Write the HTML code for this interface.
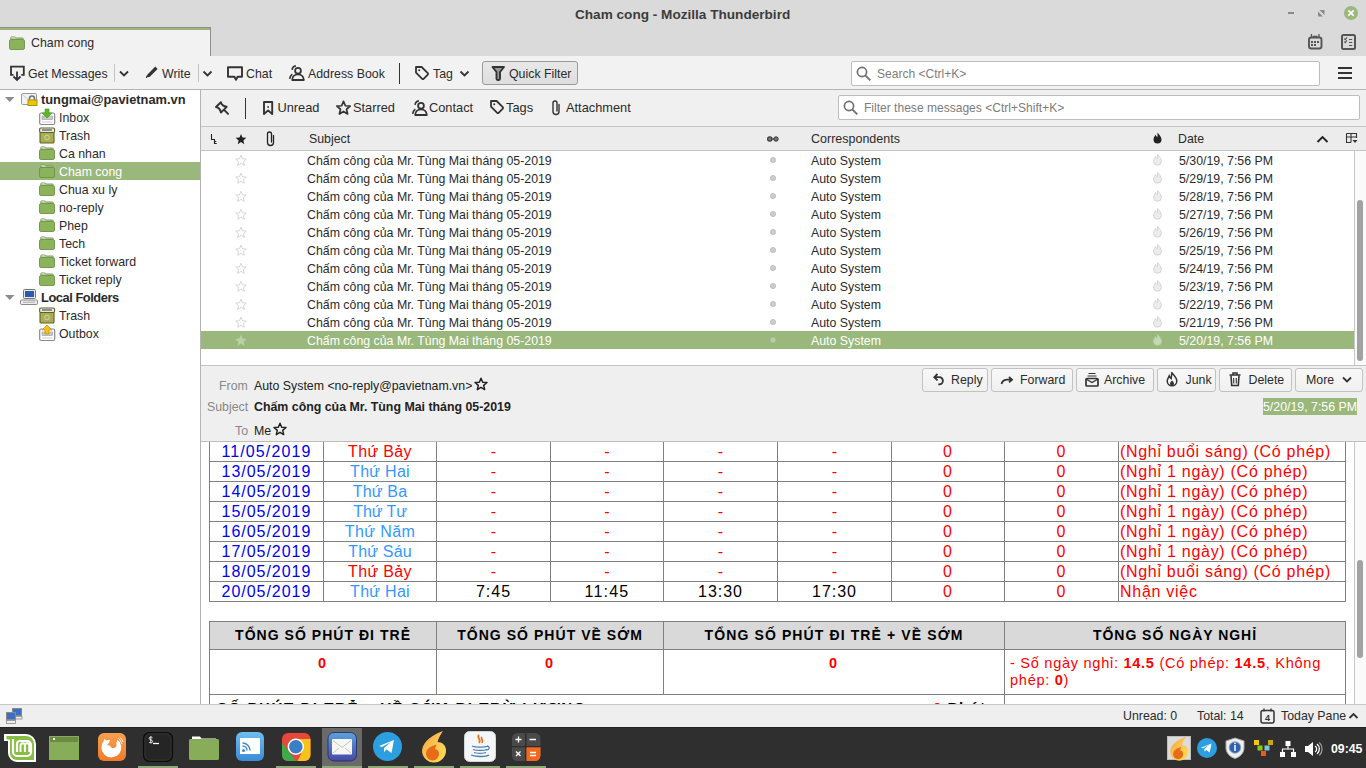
<!DOCTYPE html><html><head><meta charset="utf-8"><style>
*{box-sizing:border-box;margin:0;padding:0}
html,body{width:1366px;height:768px;overflow:hidden;background:#f2f2f2;font-family:"Liberation Sans",sans-serif;font-size:12.35px;color:#2b2b2b}
.a{position:absolute}
.t{position:absolute;white-space:nowrap;line-height:1}
#ov{position:absolute;left:0;top:0;width:1366px;height:768px;overflow:visible}
</style></head><body>
<div class="a" style="left:0px;top:0px;width:1366px;height:56px;background:#dadada"></div>
<div class="a" style="left:0px;top:27px;width:211px;height:29px;background:#f2f2f2;border-top:1px solid #8e8e8e;border-right:1px solid #8e8e8e"></div>
<div class="a" style="left:0px;top:28px;width:210px;height:2px;background:#9ab87c"></div>
<div class="a" style="left:0px;top:56px;width:1366px;height:34px;background:#f2f2f2;border-bottom:1px solid #b4b4b4"></div>
<div class="a" style="left:0px;top:90px;width:200px;height:614px;background:#fff"></div>
<div class="a" style="left:200px;top:90px;width:1px;height:614px;background:#b4b4b4"></div>
<div class="a" style="left:201px;top:90px;width:1165px;height:37px;background:#f0f0f0;border-bottom:1px solid #c4c4c4"></div>
<div class="a" style="left:201px;top:127px;width:1165px;height:24px;background:#ececec;border-bottom:1px solid #c4c4c4"></div>
<div class="a" style="left:201px;top:151px;width:1165px;height:214px;background:#fff"></div>
<div class="a" style="left:201px;top:365px;width:1165px;height:77px;background:#efefef;border-top:1px solid #c4c4c4;border-bottom:1px solid #bebebe"></div>
<div class="a" style="left:201px;top:442px;width:1165px;height:262px;background:#fff"></div>
<div class="a" style="left:0px;top:704px;width:1366px;height:23px;background:#efefef;border-top:1px solid #c8c8c8"></div>
<div class="a" style="left:0px;top:727px;width:1366px;height:41px;background:#2f2f2f;border-top:1px solid #222"></div>
<div class="t" style="left:575px;top:8px;font-weight:bold;font-size:13.6px;color:#3c3c3c">Cham cong - Mozilla Thunderbird</div>
<div class="a" style="left:1288px;top:12px;width:6px;height:2px;background:#8a8a8a"></div>
<div class="t" style="left:31px;top:37px;">Cham cong</div>
<div class="t" style="left:28px;top:68px;">Get Messages</div>
<div class="a" style="left:114px;top:64px;width:1px;height:18px;background:#c4c4c4"></div>
<div class="t" style="left:162px;top:68px;">Write</div>
<div class="a" style="left:198px;top:64px;width:1px;height:18px;background:#c4c4c4"></div>
<div class="t" style="left:246px;top:68px;">Chat</div>
<div class="t" style="left:308px;top:68px;">Address Book</div>
<div class="a" style="left:399px;top:63px;width:1.3px;height:21px;background:#333"></div>
<div class="t" style="left:433px;top:68px;">Tag</div>
<div class="a" style="left:482px;top:61px;width:96px;height:24px;background:linear-gradient(#e8e8e8,#dedede);border:1px solid #9a9a9a;border-radius:3px"></div>
<div class="t" style="left:509px;top:68px;">Quick Filter</div>
<div class="a" style="left:851px;top:61px;width:469px;height:25px;background:#fff;border:1px solid #bdbdbd;border-radius:2px"></div>
<div class="t" style="left:877px;top:68px;color:#7d7d7d;font-size:12.05px">Search &lt;Ctrl+K&gt;</div>
<div class="t" style="left:41px;top:94px;font-weight:bold;font-size:12.85px;color:#2a2a2a">tungmai@pavietnam.vn</div>
<div class="t" style="left:59px;top:112px;">Inbox</div>
<div class="t" style="left:59px;top:130px;">Trash</div>
<div class="t" style="left:59px;top:148px;">Ca nhan</div>
<div class="a" style="left:0px;top:162px;width:200px;height:18px;background:#9ab87c"></div>
<div class="t" style="left:59px;top:166px;color:#fff">Cham cong</div>
<div class="t" style="left:59px;top:184px;">Chua xu ly</div>
<div class="t" style="left:59px;top:202px;">no-reply</div>
<div class="t" style="left:59px;top:220px;">Phep</div>
<div class="t" style="left:59px;top:238px;">Tech</div>
<div class="t" style="left:59px;top:256px;">Ticket forward</div>
<div class="t" style="left:59px;top:274px;">Ticket reply</div>
<div class="t" style="left:41px;top:292px;font-weight:bold;font-size:12.85px;letter-spacing:-.45px;color:#2a2a2a">Local Folders</div>
<div class="t" style="left:59px;top:310px;">Trash</div>
<div class="t" style="left:59px;top:328px;">Outbox</div>
<div class="a" style="left:245px;top:98px;width:1.4px;height:21px;background:#333"></div>
<div class="t" style="left:277.5px;top:102px;font-size:12.8px">Unread</div>
<div class="t" style="left:353px;top:102px;font-size:12.8px">Starred</div>
<div class="t" style="left:429px;top:102px;font-size:12.8px">Contact</div>
<div class="t" style="left:506px;top:102px;font-size:12.8px">Tags</div>
<div class="t" style="left:566px;top:102px;font-size:12.8px">Attachment</div>
<div class="a" style="left:838px;top:95px;width:522px;height:25px;background:#fff;border:1px solid #bdbdbd;border-radius:2px"></div>
<div class="t" style="left:864px;top:102px;color:#7d7d7d;font-size:12.05px">Filter these messages &lt;Ctrl+Shift+K&gt;</div>
<div class="t" style="left:309px;top:133px;">Subject</div>
<div class="t" style="left:811px;top:133px;font-size:12.5px">Correspondents</div>
<div class="t" style="left:1178px;top:133px;">Date</div>
<div class="t" style="left:307px;top:155px;">Chấm công của Mr. Tùng Mai tháng 05-2019</div>
<div class="t" style="left:811px;top:155px;">Auto System</div>
<div class="t" style="left:1179px;top:155px;">5/30/19, 7:56 PM</div>
<div class="t" style="left:307px;top:173px;">Chấm công của Mr. Tùng Mai tháng 05-2019</div>
<div class="t" style="left:811px;top:173px;">Auto System</div>
<div class="t" style="left:1179px;top:173px;">5/29/19, 7:56 PM</div>
<div class="t" style="left:307px;top:191px;">Chấm công của Mr. Tùng Mai tháng 05-2019</div>
<div class="t" style="left:811px;top:191px;">Auto System</div>
<div class="t" style="left:1179px;top:191px;">5/28/19, 7:56 PM</div>
<div class="t" style="left:307px;top:209px;">Chấm công của Mr. Tùng Mai tháng 05-2019</div>
<div class="t" style="left:811px;top:209px;">Auto System</div>
<div class="t" style="left:1179px;top:209px;">5/27/19, 7:56 PM</div>
<div class="t" style="left:307px;top:227px;">Chấm công của Mr. Tùng Mai tháng 05-2019</div>
<div class="t" style="left:811px;top:227px;">Auto System</div>
<div class="t" style="left:1179px;top:227px;">5/26/19, 7:56 PM</div>
<div class="t" style="left:307px;top:245px;">Chấm công của Mr. Tùng Mai tháng 05-2019</div>
<div class="t" style="left:811px;top:245px;">Auto System</div>
<div class="t" style="left:1179px;top:245px;">5/25/19, 7:56 PM</div>
<div class="t" style="left:307px;top:263px;">Chấm công của Mr. Tùng Mai tháng 05-2019</div>
<div class="t" style="left:811px;top:263px;">Auto System</div>
<div class="t" style="left:1179px;top:263px;">5/24/19, 7:56 PM</div>
<div class="t" style="left:307px;top:281px;">Chấm công của Mr. Tùng Mai tháng 05-2019</div>
<div class="t" style="left:811px;top:281px;">Auto System</div>
<div class="t" style="left:1179px;top:281px;">5/23/19, 7:56 PM</div>
<div class="t" style="left:307px;top:299px;">Chấm công của Mr. Tùng Mai tháng 05-2019</div>
<div class="t" style="left:811px;top:299px;">Auto System</div>
<div class="t" style="left:1179px;top:299px;">5/22/19, 7:56 PM</div>
<div class="t" style="left:307px;top:317px;">Chấm công của Mr. Tùng Mai tháng 05-2019</div>
<div class="t" style="left:811px;top:317px;">Auto System</div>
<div class="t" style="left:1179px;top:317px;">5/21/19, 7:56 PM</div>
<div class="a" style="left:201px;top:331px;width:1153px;height:18px;background:#9ab87c"></div>
<div class="t" style="left:307px;top:335px;color:#fff">Chấm công của Mr. Tùng Mai tháng 05-2019</div>
<div class="t" style="left:811px;top:335px;color:#fff">Auto System</div>
<div class="t" style="left:1179px;top:335px;color:#fff">5/20/19, 7:56 PM</div>
<div class="a" style="left:1354px;top:151px;width:12px;height:214px;background:#fafafa;border-left:1px solid #c8c8c8"></div>
<div class="a" style="left:1357px;top:200px;width:6px;height:161px;background:#a2a2a2;border-radius:3px"></div>
<div class="t" style="left:219px;top:380px;color:#888">From</div>
<div class="t" style="left:254px;top:380px;color:#222">Auto System &lt;no-reply@pavietnam.vn&gt;</div>
<div class="t" style="left:207px;top:401px;color:#888">Subject</div>
<div class="t" style="left:254px;top:401px;color:#222;font-weight:bold;font-size:12.37px">Chấm công của Mr. Tùng Mai tháng 05-2019</div>
<div class="t" style="left:235px;top:425px;color:#888">To</div>
<div class="t" style="left:254px;top:425px;color:#222">Me</div>
<div class="a" style="left:922px;top:368px;width:66px;height:24px;background:linear-gradient(#f8f8f8,#f0f0f0);border:1px solid #c2c2c2;border-radius:3px"></div>
<div class="t" style="left:951px;top:374px;">Reply</div>
<div class="a" style="left:991px;top:368px;width:82px;height:24px;background:linear-gradient(#f8f8f8,#f0f0f0);border:1px solid #c2c2c2;border-radius:3px"></div>
<div class="t" style="left:1020px;top:374px;">Forward</div>
<div class="a" style="left:1076px;top:368px;width:78px;height:24px;background:linear-gradient(#f8f8f8,#f0f0f0);border:1px solid #c2c2c2;border-radius:3px"></div>
<div class="t" style="left:1104px;top:374px;">Archive</div>
<div class="a" style="left:1157px;top:368px;width:59px;height:24px;background:linear-gradient(#f8f8f8,#f0f0f0);border:1px solid #c2c2c2;border-radius:3px"></div>
<div class="t" style="left:1185.5px;top:374px;">Junk</div>
<div class="a" style="left:1219px;top:368px;width:73px;height:24px;background:linear-gradient(#f8f8f8,#f0f0f0);border:1px solid #c2c2c2;border-radius:3px"></div>
<div class="t" style="left:1248.5px;top:374px;">Delete</div>
<div class="a" style="left:1295px;top:368px;width:68px;height:24px;background:linear-gradient(#f8f8f8,#f0f0f0);border:1px solid #c2c2c2;border-radius:3px"></div>
<div class="t" style="left:1306px;top:374px;">More</div>
<div class="a" style="left:1263px;top:398px;width:94px;height:17px;background:#9ab87c"></div>
<div class="t" style="left:1263px;top:401px;color:#fff">5/20/19, 7:56 PM</div>
<div class="a" style="left:209px;top:442px;width:1px;height:160px;background:#808080"></div>
<div class="a" style="left:323px;top:442px;width:1px;height:160px;background:#808080"></div>
<div class="a" style="left:436px;top:442px;width:1px;height:160px;background:#808080"></div>
<div class="a" style="left:550px;top:442px;width:1px;height:160px;background:#808080"></div>
<div class="a" style="left:663px;top:442px;width:1px;height:160px;background:#808080"></div>
<div class="a" style="left:777px;top:442px;width:1px;height:160px;background:#808080"></div>
<div class="a" style="left:891px;top:442px;width:1px;height:160px;background:#808080"></div>
<div class="a" style="left:1004px;top:442px;width:1px;height:160px;background:#808080"></div>
<div class="a" style="left:1118px;top:442px;width:1px;height:160px;background:#808080"></div>
<div class="a" style="left:1345px;top:442px;width:1px;height:160px;background:#808080"></div>
<div class="a" style="left:209px;top:461px;width:1137px;height:1px;background:#808080"></div>
<div class="a" style="left:209px;top:481px;width:1137px;height:1px;background:#808080"></div>
<div class="a" style="left:209px;top:501px;width:1137px;height:1px;background:#808080"></div>
<div class="a" style="left:209px;top:521px;width:1137px;height:1px;background:#808080"></div>
<div class="a" style="left:209px;top:541px;width:1137px;height:1px;background:#808080"></div>
<div class="a" style="left:209px;top:561px;width:1137px;height:1px;background:#808080"></div>
<div class="a" style="left:209px;top:581px;width:1137px;height:1px;background:#808080"></div>
<div class="a" style="left:209px;top:601px;width:1137px;height:1px;background:#808080"></div>
<div class="t" style="left:221.5px;top:444px;color:#0000ee;font-size:16.0px;letter-spacing:1.10px;">11/05/2019</div>
<div class="t" style="left:348.1px;top:444px;color:#ff0000;font-size:16.0px;letter-spacing:0.34px;">Thứ Bảy</div>
<div class="t" style="left:490.7px;top:444px;color:#ff0000;font-size:16.0px;letter-spacing:0.30px;">-</div>
<div class="t" style="left:604.2px;top:444px;color:#ff0000;font-size:16.0px;letter-spacing:0.30px;">-</div>
<div class="t" style="left:717.7px;top:444px;color:#ff0000;font-size:16.0px;letter-spacing:0.30px;">-</div>
<div class="t" style="left:831.7px;top:444px;color:#ff0000;font-size:16.0px;letter-spacing:0.30px;">-</div>
<div class="t" style="left:943.0px;top:444px;color:#ff0000;font-size:16.0px;letter-spacing:1.03px;">0</div>
<div class="t" style="left:1056.5px;top:444px;color:#ff0000;font-size:16.0px;letter-spacing:1.03px;">0</div>
<div class="t" style="left:1120px;top:444px;color:#ff0000;font-size:16.0px;letter-spacing:0.69px;">(Nghỉ buổi sáng) (Có phép)</div>
<div class="t" style="left:221.5px;top:464px;color:#0000ee;font-size:16.0px;letter-spacing:0.98px;">13/05/2019</div>
<div class="t" style="left:350.1px;top:464px;color:#3399ff;font-size:16.0px;letter-spacing:0.29px;">Thứ Hai</div>
<div class="t" style="left:490.7px;top:464px;color:#ff0000;font-size:16.0px;letter-spacing:0.30px;">-</div>
<div class="t" style="left:604.2px;top:464px;color:#ff0000;font-size:16.0px;letter-spacing:0.30px;">-</div>
<div class="t" style="left:717.7px;top:464px;color:#ff0000;font-size:16.0px;letter-spacing:0.30px;">-</div>
<div class="t" style="left:831.7px;top:464px;color:#ff0000;font-size:16.0px;letter-spacing:0.30px;">-</div>
<div class="t" style="left:943.0px;top:464px;color:#ff0000;font-size:16.0px;letter-spacing:1.03px;">0</div>
<div class="t" style="left:1056.5px;top:464px;color:#ff0000;font-size:16.0px;letter-spacing:1.03px;">0</div>
<div class="t" style="left:1120px;top:464px;color:#ff0000;font-size:16.0px;letter-spacing:0.72px;">(Nghỉ 1 ngày) (Có phép)</div>
<div class="t" style="left:221.5px;top:484px;color:#0000ee;font-size:16.0px;letter-spacing:0.98px;">14/05/2019</div>
<div class="t" style="left:352.7px;top:484px;color:#3399ff;font-size:16.0px;letter-spacing:0.19px;">Thứ Ba</div>
<div class="t" style="left:490.7px;top:484px;color:#ff0000;font-size:16.0px;letter-spacing:0.30px;">-</div>
<div class="t" style="left:604.2px;top:484px;color:#ff0000;font-size:16.0px;letter-spacing:0.30px;">-</div>
<div class="t" style="left:717.7px;top:484px;color:#ff0000;font-size:16.0px;letter-spacing:0.30px;">-</div>
<div class="t" style="left:831.7px;top:484px;color:#ff0000;font-size:16.0px;letter-spacing:0.30px;">-</div>
<div class="t" style="left:943.0px;top:484px;color:#ff0000;font-size:16.0px;letter-spacing:1.03px;">0</div>
<div class="t" style="left:1056.5px;top:484px;color:#ff0000;font-size:16.0px;letter-spacing:1.03px;">0</div>
<div class="t" style="left:1120px;top:484px;color:#ff0000;font-size:16.0px;letter-spacing:0.72px;">(Nghỉ 1 ngày) (Có phép)</div>
<div class="t" style="left:221.5px;top:504px;color:#0000ee;font-size:16.0px;letter-spacing:0.98px;">15/05/2019</div>
<div class="t" style="left:353.2px;top:504px;color:#3399ff;font-size:16.0px;letter-spacing:-0.06px;">Thứ Tư</div>
<div class="t" style="left:490.7px;top:504px;color:#ff0000;font-size:16.0px;letter-spacing:0.30px;">-</div>
<div class="t" style="left:604.2px;top:504px;color:#ff0000;font-size:16.0px;letter-spacing:0.30px;">-</div>
<div class="t" style="left:717.7px;top:504px;color:#ff0000;font-size:16.0px;letter-spacing:0.30px;">-</div>
<div class="t" style="left:831.7px;top:504px;color:#ff0000;font-size:16.0px;letter-spacing:0.30px;">-</div>
<div class="t" style="left:943.0px;top:504px;color:#ff0000;font-size:16.0px;letter-spacing:1.03px;">0</div>
<div class="t" style="left:1056.5px;top:504px;color:#ff0000;font-size:16.0px;letter-spacing:1.03px;">0</div>
<div class="t" style="left:1120px;top:504px;color:#ff0000;font-size:16.0px;letter-spacing:0.72px;">(Nghỉ 1 ngày) (Có phép)</div>
<div class="t" style="left:221.5px;top:524px;color:#0000ee;font-size:16.0px;letter-spacing:0.98px;">16/05/2019</div>
<div class="t" style="left:344.7px;top:524px;color:#3399ff;font-size:16.0px;letter-spacing:0.44px;">Thứ Năm</div>
<div class="t" style="left:490.7px;top:524px;color:#ff0000;font-size:16.0px;letter-spacing:0.30px;">-</div>
<div class="t" style="left:604.2px;top:524px;color:#ff0000;font-size:16.0px;letter-spacing:0.30px;">-</div>
<div class="t" style="left:717.7px;top:524px;color:#ff0000;font-size:16.0px;letter-spacing:0.30px;">-</div>
<div class="t" style="left:831.7px;top:524px;color:#ff0000;font-size:16.0px;letter-spacing:0.30px;">-</div>
<div class="t" style="left:943.0px;top:524px;color:#ff0000;font-size:16.0px;letter-spacing:1.03px;">0</div>
<div class="t" style="left:1056.5px;top:524px;color:#ff0000;font-size:16.0px;letter-spacing:1.03px;">0</div>
<div class="t" style="left:1120px;top:524px;color:#ff0000;font-size:16.0px;letter-spacing:0.72px;">(Nghỉ 1 ngày) (Có phép)</div>
<div class="t" style="left:221.5px;top:544px;color:#0000ee;font-size:16.0px;letter-spacing:0.98px;">17/05/2019</div>
<div class="t" style="left:348.2px;top:544px;color:#3399ff;font-size:16.0px;letter-spacing:0.19px;">Thứ Sáu</div>
<div class="t" style="left:490.7px;top:544px;color:#ff0000;font-size:16.0px;letter-spacing:0.30px;">-</div>
<div class="t" style="left:604.2px;top:544px;color:#ff0000;font-size:16.0px;letter-spacing:0.30px;">-</div>
<div class="t" style="left:717.7px;top:544px;color:#ff0000;font-size:16.0px;letter-spacing:0.30px;">-</div>
<div class="t" style="left:831.7px;top:544px;color:#ff0000;font-size:16.0px;letter-spacing:0.30px;">-</div>
<div class="t" style="left:943.0px;top:544px;color:#ff0000;font-size:16.0px;letter-spacing:1.03px;">0</div>
<div class="t" style="left:1056.5px;top:544px;color:#ff0000;font-size:16.0px;letter-spacing:1.03px;">0</div>
<div class="t" style="left:1120px;top:544px;color:#ff0000;font-size:16.0px;letter-spacing:0.72px;">(Nghỉ 1 ngày) (Có phép)</div>
<div class="t" style="left:221.5px;top:564px;color:#0000ee;font-size:16.0px;letter-spacing:0.98px;">18/05/2019</div>
<div class="t" style="left:348.1px;top:564px;color:#ff0000;font-size:16.0px;letter-spacing:0.34px;">Thứ Bảy</div>
<div class="t" style="left:490.7px;top:564px;color:#ff0000;font-size:16.0px;letter-spacing:0.30px;">-</div>
<div class="t" style="left:604.2px;top:564px;color:#ff0000;font-size:16.0px;letter-spacing:0.30px;">-</div>
<div class="t" style="left:717.7px;top:564px;color:#ff0000;font-size:16.0px;letter-spacing:0.30px;">-</div>
<div class="t" style="left:831.7px;top:564px;color:#ff0000;font-size:16.0px;letter-spacing:0.30px;">-</div>
<div class="t" style="left:943.0px;top:564px;color:#ff0000;font-size:16.0px;letter-spacing:1.03px;">0</div>
<div class="t" style="left:1056.5px;top:564px;color:#ff0000;font-size:16.0px;letter-spacing:1.03px;">0</div>
<div class="t" style="left:1120px;top:564px;color:#ff0000;font-size:16.0px;letter-spacing:0.69px;">(Nghỉ buổi sáng) (Có phép)</div>
<div class="t" style="left:221.5px;top:584px;color:#0000ee;font-size:16.0px;letter-spacing:0.98px;">20/05/2019</div>
<div class="t" style="left:350.1px;top:584px;color:#3399ff;font-size:16.0px;letter-spacing:0.29px;">Thứ Hai</div>
<div class="t" style="left:476.0px;top:584px;color:#000;font-size:16.0px;letter-spacing:0.97px;">7:45</div>
<div class="t" style="left:584.5px;top:584px;color:#000;font-size:16.0px;letter-spacing:1.22px;">11:45</div>
<div class="t" style="left:698.0px;top:584px;color:#000;font-size:16.0px;letter-spacing:0.98px;">13:30</div>
<div class="t" style="left:812.0px;top:584px;color:#000;font-size:16.0px;letter-spacing:0.98px;">17:30</div>
<div class="t" style="left:943.0px;top:584px;color:#ff0000;font-size:16.0px;letter-spacing:1.03px;">0</div>
<div class="t" style="left:1056.5px;top:584px;color:#ff0000;font-size:16.0px;letter-spacing:1.03px;">0</div>
<div class="t" style="left:1120px;top:584px;color:#ff0000;font-size:16.0px;letter-spacing:0.73px;">Nhận việc</div>
<div class="a" style="left:209px;top:621px;width:1137px;height:28px;background:#d9d9d9"></div>
<div class="a" style="left:209px;top:621px;width:1px;height:74px;background:#808080"></div>
<div class="a" style="left:436px;top:621px;width:1px;height:74px;background:#808080"></div>
<div class="a" style="left:663px;top:621px;width:1px;height:74px;background:#808080"></div>
<div class="a" style="left:1004px;top:621px;width:1px;height:74px;background:#808080"></div>
<div class="a" style="left:1345px;top:621px;width:1px;height:74px;background:#808080"></div>
<div class="a" style="left:209px;top:694px;width:1px;height:12px;background:#808080"></div>
<div class="a" style="left:1004px;top:694px;width:1px;height:12px;background:#808080"></div>
<div class="a" style="left:1345px;top:694px;width:1px;height:12px;background:#808080"></div>
<div class="a" style="left:209px;top:621px;width:1137px;height:1px;background:#808080"></div>
<div class="a" style="left:209px;top:649px;width:1137px;height:1px;background:#808080"></div>
<div class="a" style="left:209px;top:694px;width:1137px;height:1px;background:#808080"></div>
<div class="t" style="left:235.1px;top:628px;color:#000;font-size:14px;letter-spacing:1.03px;font-weight:bold;">TỔNG SỐ PHÚT ĐI TRỄ</div>
<div class="t" style="left:457.2px;top:628px;color:#000;font-size:14px;letter-spacing:1.04px;font-weight:bold;">TỔNG SỐ PHÚT VỀ SỚM</div>
<div class="t" style="left:704.6px;top:628px;color:#000;font-size:14px;letter-spacing:1.11px;font-weight:bold;">TỔNG SỐ PHÚT ĐI TRỄ + VỀ SỚM</div>
<div class="t" style="left:1092.9px;top:628px;color:#000;font-size:14px;letter-spacing:0.98px;font-weight:bold;">TỔNG SỐ NGÀY NGHỈ</div>
<div class="t" style="left:318.0px;top:656px;color:#ff0000;font-size:14.5px;letter-spacing:2.03px;font-weight:bold;">0</div>
<div class="t" style="left:545.0px;top:656px;color:#ff0000;font-size:14.5px;letter-spacing:2.03px;font-weight:bold;">0</div>
<div class="t" style="left:829.0px;top:656px;color:#ff0000;font-size:14.5px;letter-spacing:2.03px;font-weight:bold;">0</div>
<div class="a" style="left:1010px;top:655px;width:330px;color:#ff0000;font-size:14.6px;line-height:17px;letter-spacing:.7px">- Số ngày nghỉ: <b>14.5</b> (Có phép: <b>14.5</b>, Không phép: <b>0</b>)</div>
<div class="t" style="left:217px;top:700px;color:#000;font-size:15px;letter-spacing:1.57px;font-weight:bold;">SỐ PHÚT ĐI TRỄ + VỀ SỚM BỊ TRỪ LƯƠNG</div>
<div class="t" style="left:933px;top:700px;color:#f00;font-weight:bold;font-size:15px">0</div>
<div class="t" style="left:947.5px;top:700px;color:#000;font-weight:bold;font-size:15px;letter-spacing:1.4px">Phút</div>
<div class="a" style="left:1354px;top:442px;width:12px;height:262px;background:#fafafa;border-left:1px solid #c8c8c8"></div>
<div class="a" style="left:1357px;top:560px;width:6px;height:98px;background:#a2a2a2;border-radius:3px"></div>
<div class="a" style="left:0px;top:704px;width:1366px;height:23px;background:#efefef;border-top:1px solid #c8c8c8"></div>
<div class="t" style="left:1123px;top:710px;">Unread: 0</div>
<div class="t" style="left:1197px;top:710px;">Total: 14</div>
<div class="t" style="left:1281px;top:710px;">Today Pane</div>
<div class="t" style="left:1331px;top:743px;color:#fff;font-weight:bold;font-size:12.3px">09:45</div>
<svg id="ov" width="1366" height="768"><path d="M1318 16.5v-5l5 5z M1324.5 10v5l-5-5z" fill="#8a8a8a"/><circle cx="1351" cy="13" r="7" fill="#9ab87c"/><path d="M1348.3 10.3l5.4 5.4M1353.7 10.3l-5.4 5.4" stroke="#fff" stroke-width="1.8"/><path d="M10.8 39V37.6a.6.6 0 0 1 .6-.6h3.8l1 1h6.4a.6.6 0 0 1 .6.6V39z" fill="#fff" stroke="#6f9147" stroke-width=".9"/><rect x="9.5" y="39.5" width="15" height="10" rx="1.6" fill="#8ab35a" stroke="#6f9147" stroke-width=".9"/><rect x="1309" y="37.5" width="12.5" height="11" rx="2.3" fill="none" stroke="#555" stroke-width="1.9"/><path d="M1311.5 34v4M1319 34v4M1313 36.5h4.5" stroke="#555" stroke-width="1.3"/><g fill="#555"><rect x="1311" y="41" width="2" height="2"/><rect x="1314" y="41" width="2" height="2"/><rect x="1317" y="41" width="2" height="2"/><rect x="1311" y="44" width="2" height="2"/><rect x="1314" y="44" width="2" height="2"/></g><rect x="1342" y="35" width="13" height="14" rx="1.5" fill="none" stroke="#555" stroke-width="2"/><path d="M1344.2 38.6l1 1 1.8-2.2M1344.2 41.6l1 1 1.8-2.2" stroke="#555" stroke-width="1.1" fill="none"/><path d="M1349 39.5h3.2M1349 42.5h3.2M1349 45.5h3.2" stroke="#555" stroke-width="1.1"/><path d="M13.5 74.8H11V66.6h12.8v8.2h-2.5" fill="none" stroke="#333" stroke-width="1.8"/><path d="M17 71.5v8.5M13.5 76.5l3.5 3.5 3.5-3.5" fill="none" stroke="#333" stroke-width="1.8"/><path d="M120 71.5l4 4 4-4" fill="none" stroke="#333" stroke-width="1.8"/><path d="M146.5 77.6l1-3.2 7.8-7.8 2.3 2.3-7.8 7.8z" fill="#333"/><path d="M146.3 78l.9-2.6" stroke="#333" stroke-width="1"/><path d="M203.5 71.5l4 4 4-4" fill="none" stroke="#333" stroke-width="1.8"/><path d="M228 67.2h14v9.6h-4.4l-1.6 3-1.6-3H228z" fill="none" stroke="#333" stroke-width="1.9" stroke-linejoin="round"/><circle cx="298" cy="70.8" r="2.9" fill="none" stroke="#333" stroke-width="1.8"/><path d="M292.2 80c0-3.4 2.6-5.6 5.8-5.6s5.8 2.2 5.8 5.6z" fill="none" stroke="#333" stroke-width="1.8" stroke-linejoin="round"/><path d="M292.1 69.8c.2-2 1.8-3.6 3.8-3.9M289.7 78.8c.3-2 1.3-3.5 2.6-4.6" fill="none" stroke="#333" stroke-width="1.6"/><path d="M416 67h5.6l6.2 6.2a1 1 0 0 1 0 1.4l-4.2 4.2a1 1 0 0 1-1.4 0L416 72.6z" fill="none" stroke="#333" stroke-width="1.8" stroke-linejoin="round"/><circle cx="419.2" cy="70.2" r="1" fill="#333"/><path d="M460.5 71.5l4 4 4-4" fill="none" stroke="#333" stroke-width="1.8"/><path d="M492.5 67h11.5l-4 5v6.8a1.2 1.2 0 0 1-1.2 1.2h-1.1a1.2 1.2 0 0 1-1.2-1.2V72z" fill="#9a9a9a" stroke="#333" stroke-width="1.9" stroke-linejoin="round"/><circle cx="862" cy="72" r="4.6" fill="none" stroke="#707070" stroke-width="1.7"/><path d="M865.3 75.3l5 5" stroke="#707070" stroke-width="1.9"/><path d="M1338 68h14M1338 73h14M1338 78h14" stroke="#333" stroke-width="1.8"/><path d="M5 97h9.5L9.75 102z" fill="#8c8c8c"/><rect x="21.5" y="93.5" width="15" height="11" rx="1.2" fill="#f2f2f2" stroke="#9a9a9a"/><path d="M22 94l6 5.5" stroke="#c8c8c8"/><path d="M29.5 100V98.5a2.5 2.5 0 0 1 5 0V100" fill="none" stroke="#777" stroke-width="1.6"/><rect x="28" y="100" width="9" height="5.5" fill="#e8c900" stroke="#b09000"/><rect x="39.7" y="113" width="15" height="11.5" rx="1.5" fill="#fff" stroke="#8a8a8a" stroke-width="1.2"/><rect x="42" y="116" width="10.5" height="3.5" fill="#c8c8c8" stroke="#999" stroke-width=".6"/><path d="M42 122h10.5" stroke="#ccc"/><path d="M45 109h4v4h3l-5 5-5-5h3z" fill="#5cb82a" stroke="#3f9a16" stroke-width=".6"/><rect x="40" y="132" width="14" height="11" rx="1" fill="#a9ad55" stroke="#5e6420" stroke-width="1.1"/><rect x="39.6" y="128" width="15" height="4.5" rx="1.2" fill="#e6e6e6" stroke="#5e6420" stroke-width="1.1"/><path d="M42 130h10" stroke="#555" stroke-width="1.2"/><circle cx="47" cy="137.5" r="2.3" fill="none" stroke="#d8dca0" stroke-width=".9"/><path d="M40.8 149V147.6a.6.6 0 0 1 .6-.6h3.8l1 1h6.4a.6.6 0 0 1 .6.6V149z" fill="#fff" stroke="#6f9147" stroke-width=".9"/><rect x="39.5" y="149.5" width="15" height="10" rx="1.6" fill="#8ab35a" stroke="#6f9147" stroke-width=".9"/><path d="M40.8 167V165.6a.6.6 0 0 1 .6-.6h3.8l1 1h6.4a.6.6 0 0 1 .6.6V167z" fill="#fff" stroke="#6f9147" stroke-width=".9"/><rect x="39.5" y="167.5" width="15" height="10" rx="1.6" fill="#8ab35a" stroke="#6f9147" stroke-width=".9"/><path d="M40.8 185V183.6a.6.6 0 0 1 .6-.6h3.8l1 1h6.4a.6.6 0 0 1 .6.6V185z" fill="#fff" stroke="#6f9147" stroke-width=".9"/><rect x="39.5" y="185.5" width="15" height="10" rx="1.6" fill="#8ab35a" stroke="#6f9147" stroke-width=".9"/><path d="M40.8 203V201.6a.6.6 0 0 1 .6-.6h3.8l1 1h6.4a.6.6 0 0 1 .6.6V203z" fill="#fff" stroke="#6f9147" stroke-width=".9"/><rect x="39.5" y="203.5" width="15" height="10" rx="1.6" fill="#8ab35a" stroke="#6f9147" stroke-width=".9"/><path d="M40.8 221V219.6a.6.6 0 0 1 .6-.6h3.8l1 1h6.4a.6.6 0 0 1 .6.6V221z" fill="#fff" stroke="#6f9147" stroke-width=".9"/><rect x="39.5" y="221.5" width="15" height="10" rx="1.6" fill="#8ab35a" stroke="#6f9147" stroke-width=".9"/><path d="M40.8 239V237.6a.6.6 0 0 1 .6-.6h3.8l1 1h6.4a.6.6 0 0 1 .6.6V239z" fill="#fff" stroke="#6f9147" stroke-width=".9"/><rect x="39.5" y="239.5" width="15" height="10" rx="1.6" fill="#8ab35a" stroke="#6f9147" stroke-width=".9"/><path d="M40.8 257V255.6a.6.6 0 0 1 .6-.6h3.8l1 1h6.4a.6.6 0 0 1 .6.6V257z" fill="#fff" stroke="#6f9147" stroke-width=".9"/><rect x="39.5" y="257.5" width="15" height="10" rx="1.6" fill="#8ab35a" stroke="#6f9147" stroke-width=".9"/><path d="M40.8 275V273.6a.6.6 0 0 1 .6-.6h3.8l1 1h6.4a.6.6 0 0 1 .6.6V275z" fill="#fff" stroke="#6f9147" stroke-width=".9"/><rect x="39.5" y="275.5" width="15" height="10" rx="1.6" fill="#8ab35a" stroke="#6f9147" stroke-width=".9"/><path d="M5 295h9.5L9.75 300z" fill="#8c8c8c"/><rect x="23.5" y="289.5" width="12" height="9" rx="1" fill="#e8e8e8" stroke="#777"/><rect x="25" y="291" width="9" height="6" fill="#2a5bb0"/><rect x="20.5" y="300" width="17" height="4.5" rx="1" fill="#ececec" stroke="#888"/><path d="M23 302.2h12" stroke="#aaa"/><rect x="40" y="312" width="14" height="11" rx="1" fill="#a9ad55" stroke="#5e6420" stroke-width="1.1"/><rect x="39.6" y="308" width="15" height="4.5" rx="1.2" fill="#e6e6e6" stroke="#5e6420" stroke-width="1.1"/><path d="M42 310h10" stroke="#555" stroke-width="1.2"/><circle cx="47" cy="317.5" r="2.3" fill="none" stroke="#d8dca0" stroke-width=".9"/><rect x="39.7" y="329" width="15" height="11.5" rx="1.5" fill="#fff" stroke="#8a8a8a" stroke-width="1.2"/><rect x="42" y="332" width="10.5" height="3.5" fill="#c8c8c8" stroke="#999" stroke-width=".6"/><path d="M42 338h10.5" stroke="#ccc"/><path d="M45 334h4V330h3L47 325l-5 5h3z" fill="#f0c020" stroke="#c08a00" stroke-width=".6"/><path d="M220.9 102.2L216 107c2.8.4 4.3 2 4.9 5.6l5.8-5.8c-3.5-.6-5.2-2-5.8-4.6z" fill="none" stroke="#333" stroke-width="1.9" stroke-linejoin="round"/><path d="M224.6 110.3l3.5 3.6" stroke="#333" stroke-width="1.9" stroke-linecap="round"/><path d="M264 102h8.2v12l-4.1-3.6-4.1 3.6z" fill="none" stroke="#333" stroke-width="1.9" stroke-linejoin="round"/><rect x="267.3" y="106.2" width="1.6" height="1.6" fill="#333"/><path d="M343.50 101.30 L345.35 105.75 L350.16 106.14 L346.50 109.27 L347.61 113.96 L343.50 111.45 L339.39 113.96 L340.50 109.27 L336.84 106.14 L341.65 105.75z" fill="none" stroke="#333" stroke-width="1.7" stroke-linejoin="round"/><circle cx="421" cy="105.8" r="2.9" fill="none" stroke="#333" stroke-width="1.8"/><path d="M415.2 115c0-3.4 2.6-5.6 5.8-5.6s5.8 2.2 5.8 5.6z" fill="none" stroke="#333" stroke-width="1.8" stroke-linejoin="round"/><path d="M415.1 104.8c.2-2 1.8-3.6 3.8-3.9M412.7 113.8c.3-2 1.3-3.5 2.6-4.6" fill="none" stroke="#333" stroke-width="1.6"/><path d="M491 101h5.6l6.2 6.2a1 1 0 0 1 0 1.4l-4.2 4.2a1 1 0 0 1-1.4 0L491 106.6z" fill="none" stroke="#333" stroke-width="1.8" stroke-linejoin="round"/><circle cx="494.2" cy="104.2" r="1" fill="#333"/><path d="M559 104.5v7a3 3 0 0 1-6 0V103a2 2 0 0 1 4 0v8" fill="none" stroke="#333" stroke-width="1.4" stroke-linecap="round"/><circle cx="849" cy="106" r="4.6" fill="none" stroke="#707070" stroke-width="1.7"/><path d="M852.3 109.3l5 5" stroke="#707070" stroke-width="1.9"/><path d="M211.5 134v5.5h3v4h2.2M214.5 141.5h1.8" fill="none" stroke="#222" stroke-width="1.1"/><path d="M241.00 134.00 L242.48 137.56 L246.33 137.87 L243.40 140.38 L244.29 144.13 L241.00 142.12 L237.71 144.13 L238.60 140.38 L235.67 137.87 L239.52 137.56z" fill="#222"/><path d="M273.5 135.5v7a3 3 0 0 1-6 0V134a2 2 0 0 1 4 0v8" fill="none" stroke="#222" stroke-width="1.3" stroke-linecap="round"/><circle cx="769.8" cy="139" r="2.2" fill="#777" stroke="#333" stroke-width="1.1"/><circle cx="776" cy="139" r="2.2" fill="#777" stroke="#333" stroke-width="1"/><path d="M771.5 139h2.5" stroke="#333"/><path d="M1157.5 132.5c1.5 2 4 4 4 7a4 4 0 0 1-8 0c0-2 1.5-3.5 2-5 .5 1.5 1 2 2 2.5 0-1.5 0-3 0-4.5z" fill="#222"/><path d="M1317.5 142l5-5 5 5" fill="none" stroke="#222" stroke-width="1.9"/><path d="M1346.5 133.5h10v4.5M1346.5 133.5v9h4.5M1346.5 137h10M1351 133.5v9" fill="none" stroke="#333" stroke-width="1.1"/><path d="M1352.5 140h5l-2.5 3z" fill="#333"/><path d="M241.00 155.20 L242.48 158.76 L246.33 159.07 L243.40 161.58 L244.29 165.33 L241.00 163.32 L237.71 165.33 L238.60 161.58 L235.67 159.07 L239.52 158.76z" fill="none" stroke="#d6d6d6" stroke-width="1"/><circle cx="773" cy="160" r="2.6" fill="#cdcdcd" stroke="#aaa" stroke-width=".6"/><path d="M1157.5 154.5c1.4 1.9 3.9 3.8 3.9 6.8a3.9 3.9 0 0 1-7.8 0c0-2 1.5-3.4 2-4.8.4 1.3.8 1.8 1.9 2.3z" fill="#ececec" stroke="#d6d6d6" stroke-width="1"/><path d="M241.00 173.20 L242.48 176.76 L246.33 177.07 L243.40 179.58 L244.29 183.33 L241.00 181.32 L237.71 183.33 L238.60 179.58 L235.67 177.07 L239.52 176.76z" fill="none" stroke="#d6d6d6" stroke-width="1"/><circle cx="773" cy="178" r="2.6" fill="#cdcdcd" stroke="#aaa" stroke-width=".6"/><path d="M1157.5 172.5c1.4 1.9 3.9 3.8 3.9 6.8a3.9 3.9 0 0 1-7.8 0c0-2 1.5-3.4 2-4.8.4 1.3.8 1.8 1.9 2.3z" fill="#ececec" stroke="#d6d6d6" stroke-width="1"/><path d="M241.00 191.20 L242.48 194.76 L246.33 195.07 L243.40 197.58 L244.29 201.33 L241.00 199.32 L237.71 201.33 L238.60 197.58 L235.67 195.07 L239.52 194.76z" fill="none" stroke="#d6d6d6" stroke-width="1"/><circle cx="773" cy="196" r="2.6" fill="#cdcdcd" stroke="#aaa" stroke-width=".6"/><path d="M1157.5 190.5c1.4 1.9 3.9 3.8 3.9 6.8a3.9 3.9 0 0 1-7.8 0c0-2 1.5-3.4 2-4.8.4 1.3.8 1.8 1.9 2.3z" fill="#ececec" stroke="#d6d6d6" stroke-width="1"/><path d="M241.00 209.20 L242.48 212.76 L246.33 213.07 L243.40 215.58 L244.29 219.33 L241.00 217.32 L237.71 219.33 L238.60 215.58 L235.67 213.07 L239.52 212.76z" fill="none" stroke="#d6d6d6" stroke-width="1"/><circle cx="773" cy="214" r="2.6" fill="#cdcdcd" stroke="#aaa" stroke-width=".6"/><path d="M1157.5 208.5c1.4 1.9 3.9 3.8 3.9 6.8a3.9 3.9 0 0 1-7.8 0c0-2 1.5-3.4 2-4.8.4 1.3.8 1.8 1.9 2.3z" fill="#ececec" stroke="#d6d6d6" stroke-width="1"/><path d="M241.00 227.20 L242.48 230.76 L246.33 231.07 L243.40 233.58 L244.29 237.33 L241.00 235.32 L237.71 237.33 L238.60 233.58 L235.67 231.07 L239.52 230.76z" fill="none" stroke="#d6d6d6" stroke-width="1"/><circle cx="773" cy="232" r="2.6" fill="#cdcdcd" stroke="#aaa" stroke-width=".6"/><path d="M1157.5 226.5c1.4 1.9 3.9 3.8 3.9 6.8a3.9 3.9 0 0 1-7.8 0c0-2 1.5-3.4 2-4.8.4 1.3.8 1.8 1.9 2.3z" fill="#ececec" stroke="#d6d6d6" stroke-width="1"/><path d="M241.00 245.20 L242.48 248.76 L246.33 249.07 L243.40 251.58 L244.29 255.33 L241.00 253.32 L237.71 255.33 L238.60 251.58 L235.67 249.07 L239.52 248.76z" fill="none" stroke="#d6d6d6" stroke-width="1"/><circle cx="773" cy="250" r="2.6" fill="#cdcdcd" stroke="#aaa" stroke-width=".6"/><path d="M1157.5 244.5c1.4 1.9 3.9 3.8 3.9 6.8a3.9 3.9 0 0 1-7.8 0c0-2 1.5-3.4 2-4.8.4 1.3.8 1.8 1.9 2.3z" fill="#ececec" stroke="#d6d6d6" stroke-width="1"/><path d="M241.00 263.20 L242.48 266.76 L246.33 267.07 L243.40 269.58 L244.29 273.33 L241.00 271.32 L237.71 273.33 L238.60 269.58 L235.67 267.07 L239.52 266.76z" fill="none" stroke="#d6d6d6" stroke-width="1"/><circle cx="773" cy="268" r="2.6" fill="#cdcdcd" stroke="#aaa" stroke-width=".6"/><path d="M1157.5 262.5c1.4 1.9 3.9 3.8 3.9 6.8a3.9 3.9 0 0 1-7.8 0c0-2 1.5-3.4 2-4.8.4 1.3.8 1.8 1.9 2.3z" fill="#ececec" stroke="#d6d6d6" stroke-width="1"/><path d="M241.00 281.20 L242.48 284.76 L246.33 285.07 L243.40 287.58 L244.29 291.33 L241.00 289.32 L237.71 291.33 L238.60 287.58 L235.67 285.07 L239.52 284.76z" fill="none" stroke="#d6d6d6" stroke-width="1"/><circle cx="773" cy="286" r="2.6" fill="#cdcdcd" stroke="#aaa" stroke-width=".6"/><path d="M1157.5 280.5c1.4 1.9 3.9 3.8 3.9 6.8a3.9 3.9 0 0 1-7.8 0c0-2 1.5-3.4 2-4.8.4 1.3.8 1.8 1.9 2.3z" fill="#ececec" stroke="#d6d6d6" stroke-width="1"/><path d="M241.00 299.20 L242.48 302.76 L246.33 303.07 L243.40 305.58 L244.29 309.33 L241.00 307.32 L237.71 309.33 L238.60 305.58 L235.67 303.07 L239.52 302.76z" fill="none" stroke="#d6d6d6" stroke-width="1"/><circle cx="773" cy="304" r="2.6" fill="#cdcdcd" stroke="#aaa" stroke-width=".6"/><path d="M1157.5 298.5c1.4 1.9 3.9 3.8 3.9 6.8a3.9 3.9 0 0 1-7.8 0c0-2 1.5-3.4 2-4.8.4 1.3.8 1.8 1.9 2.3z" fill="#ececec" stroke="#d6d6d6" stroke-width="1"/><path d="M241.00 317.20 L242.48 320.76 L246.33 321.07 L243.40 323.58 L244.29 327.33 L241.00 325.32 L237.71 327.33 L238.60 323.58 L235.67 321.07 L239.52 320.76z" fill="none" stroke="#d6d6d6" stroke-width="1"/><circle cx="773" cy="322" r="2.6" fill="#cdcdcd" stroke="#aaa" stroke-width=".6"/><path d="M1157.5 316.5c1.4 1.9 3.9 3.8 3.9 6.8a3.9 3.9 0 0 1-7.8 0c0-2 1.5-3.4 2-4.8.4 1.3.8 1.8 1.9 2.3z" fill="#ececec" stroke="#d6d6d6" stroke-width="1"/><path d="M241.00 334.80 L242.59 338.62 L246.71 338.95 L243.57 341.63 L244.53 345.65 L241.00 343.50 L237.47 345.65 L238.43 341.63 L235.29 338.95 L239.41 338.62z" fill="#bcd2a6"/><circle cx="773" cy="340" r="2.6" fill="#b8cfa4" stroke="#a9c193" stroke-width=".6"/><path d="M1157.5 334.5c1.4 1.9 3.9 3.8 3.9 6.8a3.9 3.9 0 0 1-7.8 0c0-2 1.5-3.4 2-4.8.4 1.3.8 1.8 1.9 2.3z" fill="#c5d9b3" stroke="#bcd2a6" stroke-width="1"/><path d="M481.00 378.20 L482.67 382.21 L486.99 382.55 L483.70 385.38 L484.70 389.60 L481.00 387.33 L477.30 389.60 L478.30 385.38 L475.01 382.55 L479.33 382.21z" fill="none" stroke="#222" stroke-width="1.5" stroke-linejoin="round"/><path d="M280.00 423.20 L281.67 427.21 L285.99 427.55 L282.70 430.38 L283.70 434.60 L280.00 432.33 L276.30 434.60 L277.30 430.38 L274.01 427.55 L278.33 427.21z" fill="none" stroke="#222" stroke-width="1.5" stroke-linejoin="round"/><path d="M937.5 374l-3.2 3.2 3.2 3.2" fill="none" stroke="#333" stroke-width="1.8"/><path d="M934.8 377.2h4.5a3.6 3.6 0 0 1 0 7.2h-1" fill="none" stroke="#333" stroke-width="1.8"/><path d="M1001.5 384c.8-3 2.8-4.3 5.8-4.3h4.5M1009 377l3 2.7-3 2.7" fill="none" stroke="#333" stroke-width="1.8"/><path d="M1088.5 373.5h7M1087.5 376h9" stroke="#333" stroke-width="1.2"/><rect x="1086" y="378.5" width="12" height="7.5" rx="1" fill="none" stroke="#333" stroke-width="1.7"/><path d="M1086 379l6 3.5 6-3.5" fill="none" stroke="#333" stroke-width="1.4"/><path d="M1172 373c1.5 2 4.8 4.5 4.8 8a4.8 4.8 0 0 1-9.6 0c0-2 1.5-3.5 2-5 .5 1.5 1 2 2 2.5 0-1.5.3-3.5.8-5.5z" fill="none" stroke="#333" stroke-width="1.5"/><path d="M1172 380.5c1 1 2 2 2 3a2 2 0 0 1-4 0c0-1 1-2 2-3z" fill="#333"/><path d="M1229.5 375h11M1233 375v-2h4v2" fill="none" stroke="#333" stroke-width="1.5"/><path d="M1231 375.5l.7 10h6.6l.7-10" fill="none" stroke="#333" stroke-width="1.6"/><path d="M1233.7 378v5.5M1236.3 378v5.5" stroke="#333" stroke-width="1.1"/><path d="M1343 377.5l4 4 4-4" fill="none" stroke="#333" stroke-width="1.8"/><rect x="12.5" y="708.5" width="9" height="7" fill="#3b6fc6" stroke="#888"/><rect x="13" y="716.5" width="9" height="2.5" fill="#eee" stroke="#888" stroke-width=".8"/><rect x="6.5" y="712.5" width="9" height="7" fill="#3b6fc6" stroke="#888"/><rect x="6.5" y="720.5" width="9" height="3" fill="#eee" stroke="#888" stroke-width=".8"/><rect x="1261" y="710.5" width="13" height="12.5" rx="2" fill="none" stroke="#333" stroke-width="1.5"/><path d="M1264 708.5v3M1271 708.5v3" stroke="#333" stroke-width="1.3"/><text x="1267.5" y="721" font-size="9" font-weight="bold" text-anchor="middle" fill="#333" font-family="Liberation Sans">4</text><path d="M1349.5 718l4-4 4 4" fill="none" stroke="#333" stroke-width="1.8"/><path d="M4 734h22a10 10 0 0 1 10 10v18H17A9 9 0 0 1 8 753v-12H4z" fill="#fff"/><path d="M6.5 736h19.5a8 8 0 0 1 8 8v16H17a7 7 0 0 1-7-7v-13.5H6.5z" fill="#86be43"/><path d="M13 739v13a4 4 0 0 0 4 4h10a4 4 0 0 0 4-4v-7a4 4 0 0 0-4-4h-7a3 3 0 0 0-3 3v8" fill="none" stroke="#fff" stroke-width="2.2"/><path d="M20.5 752v-6.5a2.2 2.2 0 0 1 4.4 0V752M24.9 745.5a2.2 2.2 0 0 1 4.4 0V752" fill="none" stroke="#fff" stroke-width="2"/><rect x="49" y="736" width="30" height="24" fill="#88ad58"/><rect x="50" y="737" width="28" height="5" rx="1" fill="#6b8b45"/><rect x="53" y="738" width="2" height="2" fill="#fff"/><defs><linearGradient id="ff" x1="0" y1="0" x2="0" y2="1"><stop offset="0" stop-color="#f8a04e"/><stop offset="1" stop-color="#ef7a2c"/></linearGradient><linearGradient id="rs" x1="0" y1="0" x2="0" y2="1"><stop offset="0" stop-color="#6cc0f0"/><stop offset="1" stop-color="#3a8ad8"/></linearGradient><linearGradient id="fl" x1="0" y1="0" x2="1" y2="1"><stop offset="0" stop-color="#f8a030"/><stop offset=".5" stop-color="#fcc65a"/><stop offset="1" stop-color="#ffe04a"/></linearGradient></defs><rect x="98" y="733" width="28" height="28" rx="6" fill="url(#ff)"/><path d="M117.5 739.5a10 10 0 1 1-13.8 1.5l.8-2.2 1.6 1.8c1.5-.6 3-.7 4.2-.3-.9 1-1.3 1.7-1.1 2.6-1.2.4-2 1.3-1.9 2.5 1.1-.4 2.1-.3 2.9.3.3 1.7 1.7 2.6 3.6 2.4 2.3-.3 3.3-2.5 2.5-5.1z" fill="#fff"/><path d="M118.5 738.5c1.8 1.5 3 3.5 3.3 5.5M120 737.5c1.5 1.2 2.6 2.8 3.2 4.6" fill="none" stroke="#fff" stroke-width=".9"/><rect x="143.5" y="732.5" width="29" height="29" rx="6" fill="#252525" stroke="#0c0c0c" stroke-width="1.2"/><rect x="145" y="734" width="26" height="26" rx="5" fill="none" stroke="#3a3a3a" stroke-width=".6"/><path d="M150.8 736.5v6.5M152.5 737.8c-.4-.6-1-.8-1.7-.8-1 0-1.6.6-1.6 1.4 0 1.8 3.4 1.2 3.4 3.1 0 .8-.7 1.4-1.8 1.4-.8 0-1.4-.3-1.8-.9" fill="none" stroke="#fff" stroke-width=".9"/><path d="M153 743.5h6" stroke="#fff" stroke-width="1.3"/><path d="M192 736.5h8l1.5 2H216v4h-24z" fill="#fff"/><rect x="189" y="739" width="30" height="21" rx="1.5" fill="#88ad58"/><rect x="236" y="732" width="28" height="29" rx="6" fill="url(#rs)"/><rect x="240" y="738" width="20" height="16" fill="#fff"/><circle cx="243.5" cy="750.5" r="1.5" fill="#3a8ad8"/><path d="M242.5 746a4.5 4.5 0 0 1 4.5 4.5M242.5 743a7.5 7.5 0 0 1 7.5 7.5" fill="none" stroke="#3a8ad8" stroke-width="1.5"/><defs><clipPath id="chc"><rect x="282" y="733" width="28.5" height="28" rx="6"/></clipPath></defs><g clip-path="url(#chc)"><rect x="280" y="732" width="32" height="31" fill="#e8473b"/><path d="M280 740l9.5 12.5 7.5 9.5h-17z" fill="#3faa4a"/><path d="M312 739h-16.5l7 12-5.5 11h15z" fill="#f6c21c"/></g><circle cx="295.8" cy="746.8" r="8.2" fill="#fff"/><circle cx="295.8" cy="746.8" r="6.8" fill="#3a7ec4"/><defs><linearGradient id="ml" x1="0" y1="0" x2="0" y2="1"><stop offset="0" stop-color="#5aa2dc"/><stop offset="1" stop-color="#4848a6"/></linearGradient></defs><rect x="322" y="728" width="40" height="40" fill="#6a6a6a"/><rect x="328" y="732.5" width="28.5" height="28.5" rx="6" fill="url(#ml)" stroke="#1e2a5a" stroke-width=".8"/><rect x="332" y="739" width="20" height="15.5" rx=".8" fill="#f6f6f2"/><path d="M333 740.5l9 7 9-7M333 753l6-5M351 753l-6-5" fill="none" stroke="#b0b0b0" stroke-width=".7"/><circle cx="387.5" cy="746.5" r="14.5" fill="#2b9fe0"/><path d="M379 746l15-6-2.5 13-5-3.5-2.5 2.5v-4l7-6-9 5z" fill="#fff"/><g transform="translate(420 731) scale(1)"><path d="M23 0C15 3 3 9 2 19.5a12 12 0 0 0 24 0c0-5.5-4-8.5-8.5-8.5C19 6 21 3 23 0z" fill="url(#fl)"/><path d="M16.5 13.5C12 15 6 17 6 23a6.5 6.5 0 0 0 13 0c0-3-1.5-4.5-4-5 .5-1.5 1-3 1.5-4.5z" fill="#e86c18"/></g><rect x="464.5" y="731.5" width="31" height="30" rx="5" fill="#f4f6f8" stroke="#cfd6dc"/><path d="M479 735c-3 3 3 4 0 8M482 737c-2 2 2 3 0 6" fill="none" stroke="#e8761e" stroke-width="1.8"/><path d="M472 746c3 1.5 13 1.5 16 0M473 749.5c3 1.2 11 1.2 14 0M474 752.5c3 1 9 1 12 0M471 755c5 2 15 2 18 0" fill="none" stroke="#4a7cb0" stroke-width="1.3"/><path d="M487 746c3 0 3 4-1 4" fill="none" stroke="#4a7cb0" stroke-width="1.2"/><defs><clipPath id="clc"><rect x="512" y="733" width="28.5" height="28" rx="5.5"/></clipPath></defs><g clip-path="url(#clc)"><rect x="511" y="732" width="31" height="30" fill="#4a4a4a"/><rect x="526" y="747" width="15" height="15" fill="#f06a22"/><path d="M525.8 732v30M511 746.8h31" stroke="#262626" stroke-width="1.1"/></g><path d="M515.5 739.5h6M518.5 736.5v6M529.5 739.5h6.5" stroke="#fff" stroke-width="1.3"/><path d="M516 751.5l4.5 4.5M520.5 751.5l-4.5 4.5M530 752.5h6M530 755.5h6" stroke="#fff" stroke-width="1.3"/><rect x="138" y="766" width="40" height="2" fill="#8fa878"/><rect x="276" y="766" width="40" height="2" fill="#8fa878"/><rect x="322" y="766" width="40" height="2" fill="#8fa878"/><rect x="368" y="766" width="40" height="2" fill="#8fa878"/><rect x="414" y="766" width="40" height="2" fill="#8fa878"/><rect x="460" y="766" width="40" height="2" fill="#8fa878"/><rect x="506" y="766" width="40" height="2" fill="#8fa878"/><rect x="1167.5" y="736.5" width="23" height="23" fill="#dcdcdc" stroke="#bdbdbd"/><g transform="translate(1168.5 736.5) scale(0.77)"><path d="M23 0C15 3 3 9 2 19.5a12 12 0 0 0 24 0c0-5.5-4-8.5-8.5-8.5C19 6 21 3 23 0z" fill="url(#fl)"/><path d="M16.5 13.5C12 15 6 17 6 23a6.5 6.5 0 0 0 13 0c0-3-1.5-4.5-4-5 .5-1.5 1-3 1.5-4.5z" fill="#e86c18"/></g><circle cx="1207" cy="748" r="10" fill="#2b9fe0"/><path d="M1201 747.7l10.5-4.2-1.8 9-3.5-2.4-1.8 1.7v-2.8l4.9-4.2-6.3 3.5z" fill="#fff"/><path d="M1235 738l9 3v7c0 5-4 9-9 10.5-5-1.5-9-5.5-9-10.5v-7z" fill="#eee" stroke="#aaa"/><circle cx="1235" cy="747.5" r="5.8" fill="#2f62b0" stroke="#9ab" stroke-width=".8"/><path d="M1235 745v6" stroke="#fff" stroke-width="1.5"/><circle cx="1235" cy="743.3" r=".9" fill="#fff"/><rect x="1254" y="740" width="5" height="5" fill="#f2c80f"/><rect x="1268" y="740" width="5" height="5" fill="#c9a80a"/><rect x="1257.5" y="745.5" width="5" height="5" fill="#8cc814"/><rect x="1264.5" y="745.5" width="5" height="5" fill="#7cc4de"/><rect x="1261" y="751" width="5" height="5" fill="#f05a12"/><rect x="1285.5" y="741" width="5" height="5" fill="#fff"/><rect x="1280" y="752" width="5" height="5" fill="#fff"/><rect x="1291" y="752" width="5" height="5" fill="#fff"/><path d="M1288 746v3M1282.5 752v-3h11v3" fill="none" stroke="#fff" stroke-width="1.2"/><path d="M1305 746h3l5-4v14l-5-4h-3z" fill="#fff"/><path d="M1315 746a3.5 3.5 0 0 1 0 6M1317 744a6.5 6.5 0 0 1 0 10" fill="none" stroke="#fff" stroke-width="1.3"/><path d="M1319.3 742.5a9 9 0 0 1 0 13" fill="none" stroke="#999" stroke-width="1.3"/></svg>
</body></html>
